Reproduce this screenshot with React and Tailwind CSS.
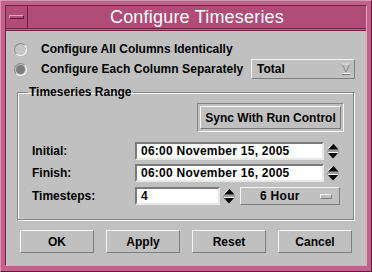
import React from "react";

const F = { fontFamily: '"Liberation Sans", Arial, sans-serif' };

function Radio({ on }) {
  return (
    <div className="w-[13px] h-[13px] rounded-full border border-t-[#8a8a8a] border-l-[#8a8a8a] border-b-[#ffffff] border-r-[#ffffff] bg-[#c4c4c4] flex items-center justify-center">
      {on && <div className="w-[9px] h-[9px] rounded-full bg-[#7c7c7c]" />}
    </div>
  );
}

function Spinner() {
  return (
    <svg width="14" height="18" viewBox="0 0 14 18" className="shrink-0">
      <polygon points="7,1.5 12.5,7.5 1.5,7.5" fill="#000" />
      <polyline points="1.5,7.5 7,1.5" stroke="#fff" strokeWidth="1" fill="none" />
      <line x1="1" y1="9" x2="13" y2="9" stroke="#7f7f7f" />
      <polygon points="1.5,10.5 12.5,10.5 7,16.5" fill="#000" />
      <line x1="2" y1="10.5" x2="12" y2="10.5" stroke="#ffffff" />
    </svg>
  );
}

function Field({ w, text }) {
  return (
    <div
      className={`${w} h-[18px] bg-white border-2 border-t-[#7b7b7b] border-l-[#7b7b7b] border-b-[#e8e8e8] border-r-[#e8e8e8] flex items-center pl-[4px] text-[12px] font-bold tracking-[0.25px] text-black`}
    >
      {text}
    </div>
  );
}

function Btn({ children }) {
  return (
    <div className="w-[74px] h-[23px] border border-t-[#f4f4f4] border-l-[#f4f4f4] border-b-[#7f7f7f] border-r-[#7f7f7f] bg-[#c0c0c0] flex items-center justify-center text-[12px] font-bold text-black">
      {children}
    </div>
  );
}

export default function App() {
  return (
    <div style={F} className="w-[372px] h-[272px] bg-[#c2628c] border border-t-[#dc94b4] border-l-[#dc94b4] border-b-[#5e1c3c] border-r-[#5e1c3c] pt-[4px] pl-[4px] pr-[4px] pb-[5px] flex flex-col">
      <div className="flex flex-col flex-1 border border-t-[#6a2444] border-l-[#6a2444] border-b-[#e8a4c4] border-r-[#e8a4c4]">
        <div className="h-[23px] flex bg-[#b04c78] border-b border-b-[#6a2444]">
          <div className="w-[22px] h-full border-r border-r-[#6a2444] flex items-center justify-center">
            <div className="w-[15px] h-[4px] border border-t-[#e8a0c0] border-l-[#e8a0c0] border-b-[#5e1c3c] border-r-[#5e1c3c] bg-[#b04c78]" />
          </div>
          <div className="flex-1 flex items-center justify-center text-white text-[18px] tracking-[0.2px] leading-none">
            Configure Timeseries
          </div>
        </div>
        <div className="h-[1px]" />
        <div className="flex-1 bg-[#c0c0c0] border-t border-t-[#6a2444] flex flex-col text-black">
          <div className="flex items-center h-[16px] mt-[10px] pl-[8px]">
            <Radio />
            <span className="ml-[14px] text-[12px] font-bold">Configure All Columns Identically</span>
          </div>
          <div className="flex items-center h-[20px] mt-[2px] pl-[8px]">
            <Radio on />
            <span className="ml-[14px] text-[12px] font-bold tracking-[0.05px]">Configure Each Column Separately</span>
            <div className="ml-auto mr-[11px] w-[104px] h-[20px] border border-t-[#f4f4f4] border-l-[#f4f4f4] border-b-[#7f7f7f] border-r-[#7f7f7f] flex items-center pl-[5px] pr-[3px] text-[12px] font-bold">
              <span className="flex-1">Total</span>
              <svg width="10" height="13" viewBox="0 0 10 13">
                <polygon points="1,1 9,1 5,9" fill="none" stroke="#888" />
                <line x1="1" y1="1" x2="9" y2="1" stroke="#fff" />
                <line x1="1" y1="11.5" x2="9" y2="11.5" stroke="#777" />
                <line x1="1" y1="10.5" x2="9" y2="10.5" stroke="#fff" />
              </svg>
            </div>
          </div>

          <fieldset className="ml-[11px] w-[337px] mt-[6px] border border-[#858585] shadow-[inset_1px_1px_0_#f8f8f8,1px_1px_0_#f8f8f8] pl-[10px] pr-[9px] pb-[14px]">
            <legend className="px-[1px] text-[12px] font-bold leading-[14px]">Timeseries Range</legend>
            <div className="flex justify-end mt-[4px]">
              <div className="w-[147px] h-[29px] border border-t-[#858585] border-l-[#858585] border-b-[#f8f8f8] border-r-[#f8f8f8] p-[2px]">
                <div className="w-full h-full border border-t-[#f8f8f8] border-l-[#f8f8f8] border-b-[#7a7a7a] border-r-[#7a7a7a] flex items-center justify-center text-[12px] font-bold">
                  Sync With Run Control
                </div>
              </div>
            </div>
            <div className="flex items-center mt-[10px] h-[18px]">
              <span className="w-[107px] pl-[4px] text-[12px] font-bold">Initial:</span>
              <Field w="w-[189px]" text="06:00 November 15, 2005" />
              <div className="ml-[2px]"><Spinner /></div>
            </div>
            <div className="flex items-center mt-[4px] h-[18px]">
              <span className="w-[107px] pl-[4px] text-[12px] font-bold">Finish:</span>
              <Field w="w-[189px]" text="06:00 November 16, 2005" />
              <div className="ml-[2px]"><Spinner /></div>
            </div>
            <div className="flex items-center mt-[5px] h-[18px]">
              <span className="w-[107px] pl-[4px] text-[12px] font-bold">Timesteps:</span>
              <Field w="w-[85px]" text="4" />
              <div className="ml-[2px]"><Spinner /></div>
              <div className="ml-[4px] w-[100px] h-[18px] border border-t-[#f4f4f4] border-l-[#f4f4f4] border-b-[#7f7f7f] border-r-[#7f7f7f] flex items-center text-[12px] font-bold">
                <span className="ml-[19px] flex-1 tracking-[0.3px]">6 Hour</span>
                <div className="mr-[7px] w-[12px] h-[5px] border border-t-[#f4f4f4] border-l-[#f4f4f4] border-b-[#7f7f7f] border-r-[#7f7f7f]" />
              </div>
            </div>
          </fieldset>

          <div className="flex gap-[12px] ml-[14px] mt-[10px]">
            <Btn>OK</Btn>
            <Btn>Apply</Btn>
            <Btn>Reset</Btn>
            <Btn>Cancel</Btn>
          </div>
        </div>
      </div>
    </div>
  );
}
